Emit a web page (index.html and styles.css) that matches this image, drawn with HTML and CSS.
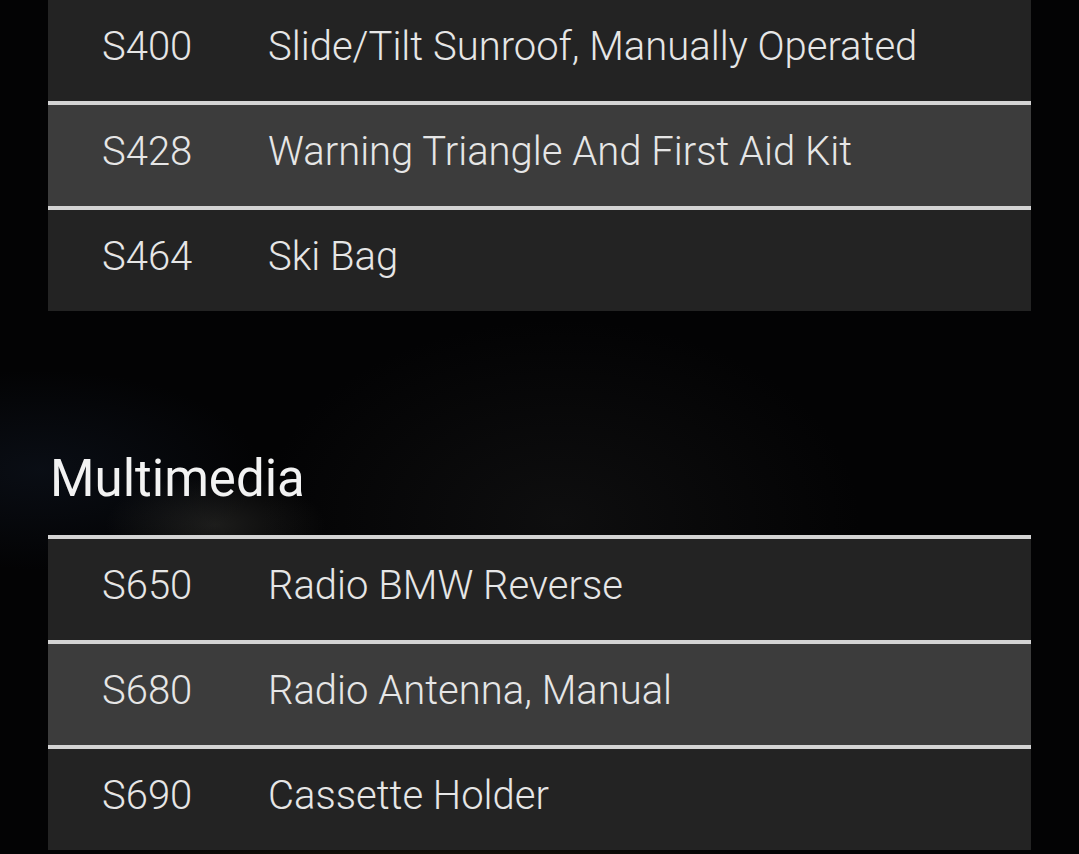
FILE: index.html
```html
<!DOCTYPE html>
<html>
<head>
    <title>Options</title>
    <meta charset="UTF-8">
    <link rel="stylesheet" href="styles.css">
</head>
<body>
    <div class="container">
        <div class="options first">
            <div class="option">
                <span class="code">S400</span>
                <span class="desc">Slide/Tilt Sunroof, Manually Operated</span>
            </div>
            <div class="option alt">
                <span class="code">S428</span>
                <span class="desc">Warning Triangle And First Aid Kit</span>
            </div>
            <div class="option">
                <span class="code">S464</span>
                <span class="desc">Ski Bag</span>
            </div>
        </div>

        <h2 class="section-title">Multimedia</h2>

        <div class="options">
            <div class="option">
                <span class="code">S650</span>
                <span class="desc">Radio BMW Reverse</span>
            </div>
            <div class="option alt">
                <span class="code">S680</span>
                <span class="desc">Radio Antenna, Manual</span>
            </div>
            <div class="option">
                <span class="code">S690</span>
                <span class="desc">Cassette Holder</span>
            </div>
        </div>
    </div>
</body>
</html>
```

FILE: styles.css
```css
html, body {
    height: 100%;
}
body {
    margin: 0;
    overflow: hidden;
    font-family: Roboto, "Liberation Sans", sans-serif;
    color: #e6e6e6;
    background-color: #030304;
    background-image:
        radial-gradient(ellipse 110px 50px at 215px 525px, rgba(120,120,110,0.22), transparent),
        radial-gradient(ellipse 220px 100px at 40px 470px, rgba(30,45,70,0.25), transparent),
        radial-gradient(ellipse 400px 30px at 420px 870px, rgba(120,100,40,0.3), transparent),
        radial-gradient(ellipse 300px 200px at 560px 520px, rgba(40,40,40,0.3), transparent);
}
.container {
    padding: 0 48px;
}
.options {
    background-color: #232323;
}
.options.first {
    margin-top: -4px;
}
.option {
    display: flex;
    align-items: center;
    height: 105px;
    box-sizing: border-box;
    padding: 0 0 7px 54px;
    border-top: 4px solid #d4d4d4;
    font-size: 40px;
    font-weight: 300;
    line-height: 40px;
}
.alt {
    background-color: #3c3c3c;
}
.code {
    width: 166px;
    flex-shrink: 0;
}
.section-title {
    margin: 142px 0 30px 2px;
    font-size: 51px;
    font-weight: 400;
    line-height: 52px;
    color: #f2f2f2;
}
```
